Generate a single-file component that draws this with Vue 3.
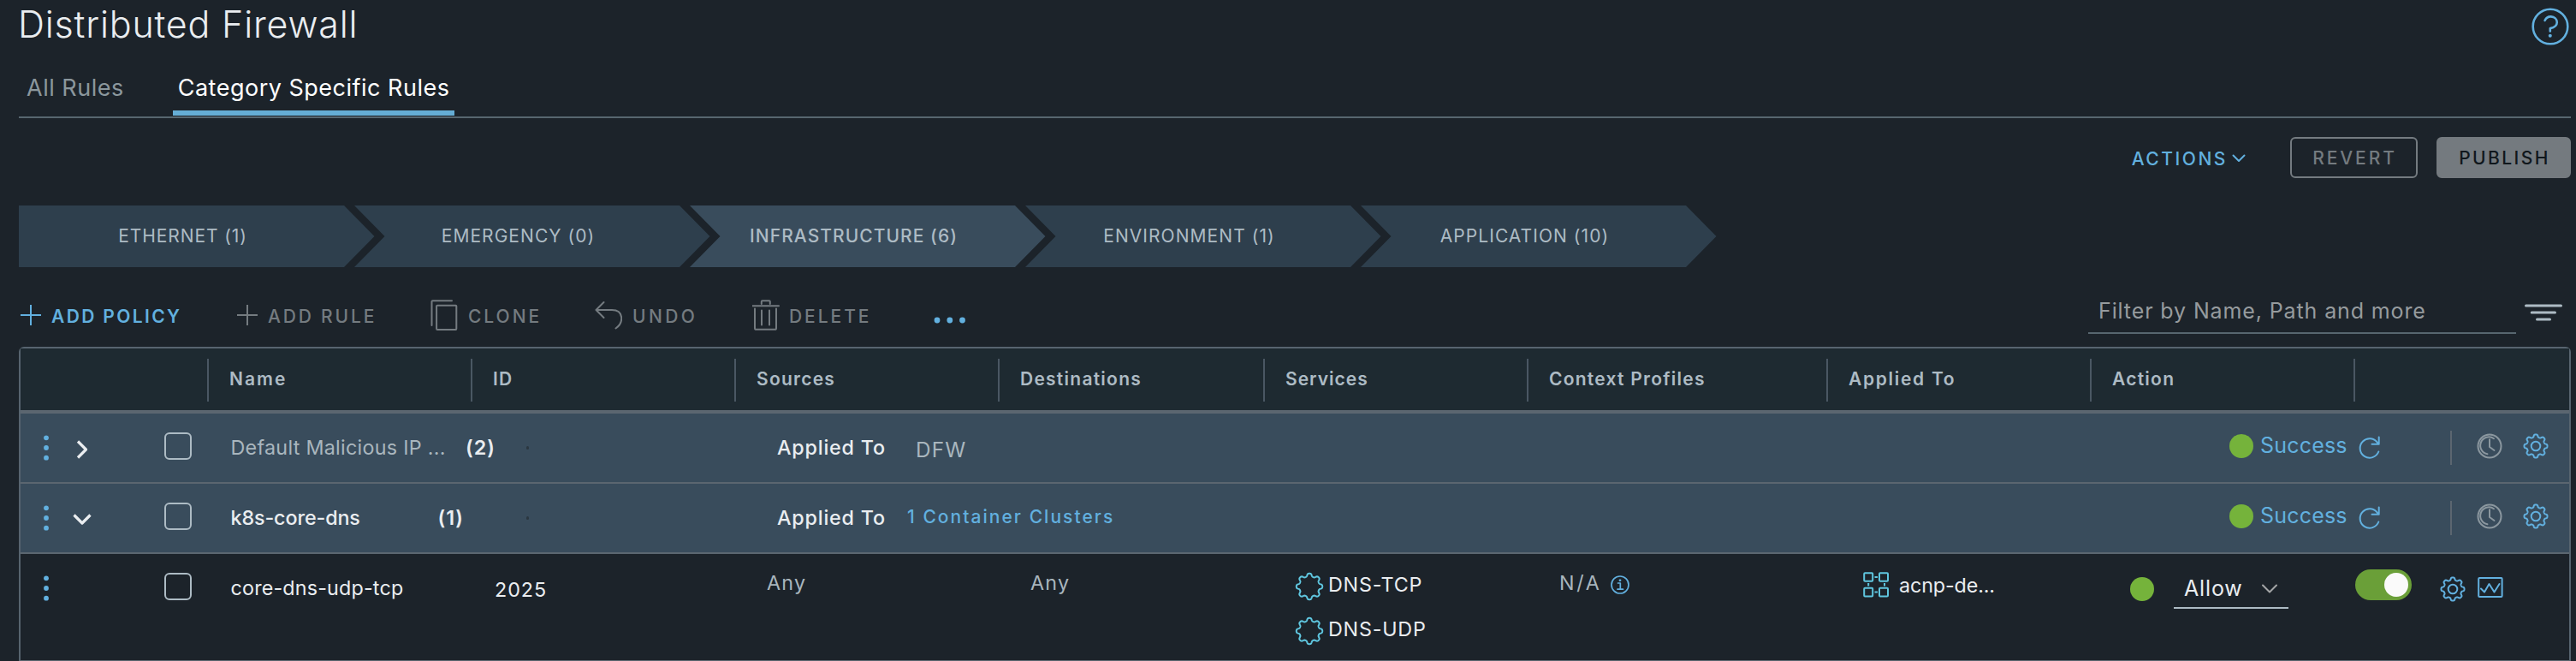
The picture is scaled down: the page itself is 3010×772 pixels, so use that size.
<script setup>
const stages = [
  { label: 'ETHERNET (1)' },
  { label: 'EMERGENCY (0)' },
  { label: 'INFRASTRUCTURE (6)', active: true },
  { label: 'ENVIRONMENT (1)' },
  { label: 'APPLICATION (10)' }
]
const columns = ['', 'Name', 'ID', 'Sources', 'Destinations', 'Services', 'Context Profiles', 'Applied To', 'Action', '']
const policies = [
  { name: 'Default Malicious IP ...', count: '(2)', open: false, scope: 'DFW' },
  { name: 'k8s-core-dns', count: '(1)', open: true, scope: '1 Container Clusters' }
]
const services = ['DNS-TCP', 'DNS-UDP']

// Closed eight-lobed outline centred on (c, c); a higher sharpness squares off the lobes.
function cog(c, outer, inner, sharpness) {
  const mid = (outer + inner) / 2
  const amp = (outer - inner) / 2 / Math.tanh(sharpness)
  const points = []
  for (let i = 0; i < 192; i++) {
    const a = (i / 192) * Math.PI * 2
    const r = mid + amp * Math.tanh(sharpness * Math.cos(8 * a))
    points.push(`${(c + r * Math.cos(a)).toFixed(2)} ${(c + r * Math.sin(a)).toFixed(2)}`)
  }
  return `M${points.join('L')}Z`
}
const cogSmall = cog(15, 13.5, 10.6, 2)
const cogLarge = cog(17, 15.2, 11.8, 1.7)
</script>

<template>
  <div class="page">
    <header class="head">
      <h1>Distributed Firewall</h1>
      <svg class="help" width="44" height="44" viewBox="0 0 44 44">
        <circle cx="22" cy="22" r="20.3" />
        <path d="M15.6 14.8C17.6 11.2 20.4 10.2 22.8 10.4c4 .3 7 3 7 6.700 0 4.300-3.600 6.200-8 7V27.500" />
        <circle class="pt" cx="21.800" cy="32.800" r="2" />
      </svg>
    </header>

    <nav class="tabs">
      <a class="tab">All Rules</a>
      <a class="tab on">Category Specific Rules</a>
    </nav>

    <div class="actions">
      <span class="menu">ACTIONS</span>
      <svg class="menu-caret" width="18" height="12" viewBox="0 0 18 12"><path d="M2.500 2.500 9 9l6.500-6.500" /></svg>
      <button class="btn">REVERT</button>
      <button class="btn solid">PUBLISH</button>
    </div>

    <div class="stages">
      <div v-for="(s, i) in stages" :key="s.label" class="stage" :class="{ first: i === 0, active: s.active }">{{ s.label }}</div>
    </div>

    <div class="toolbar">
      <div class="tool policy">
        <svg width="24" height="24" viewBox="0 0 24 24"><path d="M12 0v24M0 12h24" /></svg>
        <span>ADD POLICY</span>
      </div>
      <div class="tool rule">
        <svg width="24" height="24" viewBox="0 0 24 24"><path d="M12 0v24M0 12h24" /></svg>
        <span>ADD RULE</span>
      </div>
      <div class="tool clone">
        <svg width="32" height="36" viewBox="0 0 32 36"><path d="M1.500 30V2.200Q1.500 1.200 2.500 1.200H25M8 6.700H29.500Q30.300 6.700 30.300 7.500V34Q30.300 34.900 29.500 34.900H8Q7.100 34.900 7.100 34V7.500Q7.100 6.700 8 6.700Z" /></svg>
        <span>CLONE</span>
      </div>
      <div class="tool undo">
        <svg width="32" height="36" viewBox="0 0 32 36"><path d="M10.500 3 1.500 12l9 9M1.500 12H20C34 12 34 27 24.500 33.500" /></svg>
        <span>UNDO</span>
      </div>
      <div class="tool delete">
        <svg width="32" height="36" viewBox="0 0 32 36"><path d="M0 7.200h31M10.800 5V2.200Q10.800 1.200 11.800 1.200h8q1 0 1 1V5M3 10.500V33.200Q3 34.800 4.500 34.800H26.500Q28 34.800 28 33.200V10.500M11 12.500V29.500M20 12.500V29.500" /></svg>
        <span>DELETE</span>
      </div>
      <svg class="more" width="38" height="10" viewBox="0 0 38 10"><circle cx="4" cy="5" r="3.400" /><circle cx="18.800" cy="5" r="3.400" /><circle cx="33.500" cy="5" r="3.400" /></svg>
      <div class="filter">Filter by Name, Path and more</div>
      <svg class="filter-icon" width="44" height="20" viewBox="0 0 44 20"><path d="M1.500 2H42.500M8.200 10H35.500M14.500 18H29.500" /></svg>
    </div>

    <section class="table">
      <div class="row thead">
        <div v-for="(c, i) in columns" :key="i" class="th">{{ c }}</div>
      </div>

      <div v-for="p in policies" :key="p.name" class="row group" :class="{ open: p.open }">
        <div class="controls">
          <svg class="dots" width="8" height="32" viewBox="0 0 8 32"><circle cx="4" cy="4.300" r="2.900" /><circle cx="4" cy="16" r="2.900" /><circle cx="4" cy="27.700" r="2.900" /></svg>
          <svg v-if="!p.open" class="toggle-caret" width="24" height="24" viewBox="0 0 24 24"><path d="M7 2.500 16.500 12 7 21.500" /></svg>
          <svg v-else class="toggle-caret" width="24" height="24" viewBox="0 0 24 24"><path d="M2.500 6.500 12 16l9.500-9.500" /></svg>
          <span class="check"></span>
        </div>
        <div class="policy-name">
          <span class="pname">{{ p.name }}</span>
          <span class="count">{{ p.count }}</span>
        </div>
        <span class="speck"></span>
        <div class="scope">
          <span class="scope-label">Applied To</span>
          <span class="scope-value">{{ p.scope }}</span>
        </div>
        <div class="status">
          <span class="bullet"></span>
          <span class="success">Success</span>
          <svg class="refresh" width="26" height="28" viewBox="0 0 26 28"><path d="M23.700 1.500V9.700H15.500M22.300 8.500A11.200 11.200 0 1 0 23.300 18.500" /></svg>
          <span class="bar"></span>
          <svg class="clock" width="30" height="30" viewBox="0 0 30 30"><circle cx="15" cy="15" r="13.500" /><path d="M15 7.300V16l5.500 4M20 6.200A10 10 0 1 0 12.500 24.200" /></svg>
          <svg class="gear" width="30" height="30" viewBox="0 0 30 30"><path :d="cogSmall" /><circle cx="15" cy="15" r="5.300" /></svg>
        </div>
      </div>

      <div class="row rule-row">
        <div class="controls">
          <svg class="dots" width="8" height="32" viewBox="0 0 8 32"><circle cx="4" cy="4.300" r="2.900" /><circle cx="4" cy="16" r="2.900" /><circle cx="4" cy="27.700" r="2.900" /></svg>
          <span class="check"></span>
        </div>
        <div class="cell rname">core-dns-udp-tcp</div>
        <div class="cell rid">2025</div>
        <div class="cell any">Any</div>
        <div class="cell any">Any</div>
        <div class="cell services">
          <div v-for="s in services" :key="s" class="service">
            <svg width="34" height="34" viewBox="0 0 34 34"><path :d="cogLarge" /></svg>
            <span>{{ s }}</span>
          </div>
        </div>
        <div class="cell context">
          <span>N/A</span>
          <svg width="24" height="24" viewBox="0 0 24 24"><circle cx="12" cy="12" r="10" /><path d="M9.500 10h2.800v7M9 17.200h6.500" /><circle class="pt" cx="12" cy="6.800" r="1.400" /></svg>
        </div>
        <div class="cell applied">
          <svg width="30" height="30" viewBox="0 0 30 30"><rect x="1.200" y="1.200" width="10" height="9.600" rx="1" /><rect x="19" y="1.200" width="10" height="9.600" rx="1" /><rect x="1.200" y="18.800" width="10" height="9.600" rx="1" /><rect x="19" y="18.800" width="10" height="9.600" rx="1" /><path d="M13.500 6h3.500M13.500 23.600h3.500M6.200 13v3.500M25 13v3.500" /></svg>
          <span>acnp-de...</span>
        </div>
        <div class="cell action">
          <span class="bullet"></span>
          <div class="select">
            <span>Allow</span>
            <svg width="20" height="14" viewBox="0 0 20 14"><path d="M2 2.500 10 10.500l8-8" /></svg>
          </div>
        </div>
        <div class="cell extras">
          <span class="switch"><i></i></span>
          <svg class="gear" width="30" height="30" viewBox="0 0 30 30"><path :d="cogSmall" /><circle cx="15" cy="15" r="5.300" /></svg>
          <svg class="chart" width="30" height="24" viewBox="0 0 30 24"><rect x="1.200" y="1" width="27.400" height="22" rx="1" /><path d="M4 13.500 8 17.500 13.500 8 19.500 17.500 25.500 8" /></svg>
        </div>
      </div>
    </section>
  </div>
</template>

<style>
html,
body {
  margin: 0;
  background: #1c232a;
  overflow: hidden;
}
</style>

<style scoped>
.page {
  box-sizing: border-box;
  width: 3010px;
  height: 772px;
  padding: 0 6px 0 22px;
  overflow: hidden;
  background: #1c232a;
  color: #eaedf0;
  font-family: Inter, "Noto Sans", sans-serif;
}
.page * {
  box-sizing: border-box;
  white-space: nowrap;
}
svg {
  display: block;
  flex: none;
  fill: none;
  stroke: currentColor;
  stroke-width: 2;
  stroke-linecap: round;
  stroke-linejoin: round;
}
svg .pt {
  fill: currentColor;
  stroke: none;
}
.head {
  display: flex;
  justify-content: space-between;
  height: 57px;
}
h1 {
  margin: 0 0 0 -1px;
  font-size: 43px;
  line-height: 57px;
  font-weight: 350;
  letter-spacing: 0.800px;
}
.help {
  margin: 9px 2px 0 0;
  color: #62b0df;
  stroke-width: 2.600;
}
.tabs {
  display: flex;
  height: 81px;
  border-bottom: 2px solid #57666f;
}
.tab {
  height: 78px;
  padding: 19px 7px 0 9px;
  border-bottom: 6px solid transparent;
  font-size: 27px;
  line-height: 53px;
  letter-spacing: 0.500px;
  color: #8b979d;
}
.tab.on {
  width: 329px;
  margin-left: 50px;
  padding-left: 6px;
  color: #fff;
  border-color: #65add5;
}
.actions {
  display: flex;
  justify-content: flex-end;
  align-items: center;
  height: 48px;
  margin-top: 22px;
  font-size: 21px;
}
.menu {
  padding-top: 2px;
  color: #62b0df;
  font-weight: 500;
  letter-spacing: 2.550px;
}
.menu-caret {
  margin: 2px 51px 0 4px;
  color: #62b0df;
}
.btn {
  width: 149px;
  height: 48px;
  padding: 0 0 0 2px;
  border: 2px solid #747b80;
  border-radius: 6px;
  background: transparent;
  color: #747b80;
  font: 500 21px Inter, sans-serif;
  letter-spacing: 2.910px;
}
.btn.solid {
  width: 157px;
  margin-left: 22px;
  background: #747a7f;
  border-color: #747a7f;
  color: #10171c;
  letter-spacing: 2.440px;
}
.stages {
  display: flex;
  margin-top: 32px;
}
.stage {
  width: 415.500px;
  height: 72px;
  margin-right: -23.500px;
  padding: 0 32.500px 1px 0;
  clip-path: polygon(0 0, 380px 0, 100% 50%, 380px 100%, 0 100%, 35.500px 50%);
  background: #2e3f4d;
  color: #adbbc4;
  font-size: 21px;
  line-height: 71px;
  letter-spacing: 1.050px;
  text-align: center;
}
.stage.first {
  letter-spacing: 0.910px;
  clip-path: polygon(0 0, 380px 0, 100% 50%, 380px 100%, 0 100%);
}
.stage.active {
  background: #394c5c;
  font-weight: 500;
}
.toolbar {
  display: flex;
  align-items: flex-start;
  height: 93px;
  padding-top: 32px;
  color: #747b80;
  font-size: 21px;
  font-weight: 500;
  letter-spacing: 2.950px;
}
.tool {
  display: flex;
  align-items: center;
  height: 48px;
}
.tool span {
  padding-top: 3px;
}
.tool.policy {
  width: 253px;
  padding-left: 2px;
  gap: 12px;
  color: #62b0df;
  font-weight: 600;
  letter-spacing: 2.360px;
}
.tool.rule {
  width: 225px;
  padding-left: 2px;
  gap: 12px;
  letter-spacing: 2.830px;
}
.tool.clone {
  width: 195px;
  padding-left: 3px;
  gap: 12px;
}
.tool.undo {
  width: 182px;
  gap: 12px;
  letter-spacing: 3.410px;
}
.tool.delete {
  width: 192px;
  padding-left: 2px;
  gap: 11px;
}
.more {
  margin: 25px 0 0 22px;
  fill: #62b0df;
  stroke: none;
}
.filter {
  width: 500px;
  height: 50px;
  margin: -4px 10px 0 auto;
  padding: 0 0 3px 12px;
  border-bottom: 2px solid #57666f;
  color: #969b9e;
  font-size: 25px;
  font-weight: 400;
  line-height: 46px;
  letter-spacing: 0.880px;
}
.filter-icon {
  margin: 11px 10px 0 0;
  color: #adbbc4;
  stroke-width: 3;
}
.table {
  height: 400px;
  border: 2px solid #57646f;
  border-radius: 6px 6px 0 0;
}
.row {
  display: flex;
}
.thead {
  height: 76px;
  padding-top: 12px;
  border-bottom: 4px solid #5b6670;
  background: #1e2a31;
}
.th {
  width: 308px;
  height: 50px;
  padding: 0 0 1px 24px;
  border-left: 2px solid #4a5763;
  color: #adbbc4;
  font-size: 21px;
  font-weight: 600;
  line-height: 47px;
  letter-spacing: 1.250px;
}
.th:nth-child(1) {
  width: 218px;
  border: 0;
}
.th:nth-child(2) {
  letter-spacing: 2px;
}
.th:nth-child(5) {
  width: 310px;
}
.th:nth-child(6) {
  letter-spacing: 1px;
}
.th:nth-child(7) {
  width: 350px;
}
.th:nth-child(8) {
  letter-spacing: 1.700px;
}
.th:nth-child(10) {
  width: 250px;
}
.group {
  height: 82px;
  border-bottom: 2px solid #5b6670;
  background: #394c5c;
  font-size: 23.300px;
  line-height: 80px;
}
.controls {
  display: flex;
  width: 218px;
  height: 80px;
  padding-left: 26px;
}
.dots {
  margin-top: 24px;
  fill: #62b0df;
  stroke: none;
}
.toggle-caret {
  margin: 30px 0 0 26px;
  stroke-width: 3.200;
  stroke-linecap: butt;
}
.check {
  width: 32px;
  height: 32px;
  margin: 22px 18px 0 auto;
  border: 2px solid #adbbc4;
  border-radius: 6px;
}
.policy-name {
  display: flex;
  width: 373px;
  padding-left: 27.500px;
}
.pname {
  width: 274.500px;
  color: #a9b6be;
  letter-spacing: 0.280px;
}
.count {
  font-weight: 600;
  letter-spacing: 1px;
}
.open .pname {
  width: 242px;
  color: #eaedf0;
  font-weight: 500;
  letter-spacing: -0.100px;
}
.speck {
  width: 3px;
  height: 4px;
  margin-top: 38px;
  border-radius: 2px;
  background: #2b3740;
}
.scope {
  display: flex;
  margin-left: 290px;
}
.scope-label {
  width: 162px;
  font-weight: 500;
  letter-spacing: 0.810px;
}
.scope-value {
  padding-top: 2px;
  color: #a9b6be;
  font-size: 24.300px;
  letter-spacing: 1.200px;
}
.open .scope-label {
  width: 152px;
}
.open .scope-value {
  padding: 0;
  margin-top: -1px;
  color: #62b0df;
  font-size: 21px;
  font-weight: 500;
  letter-spacing: 2.040px;
}
.bullet {
  flex: none;
  width: 28px;
  height: 28px;
  border-radius: 50%;
  background: #75b33b;
}
.status {
  display: flex;
  width: 398px;
  margin-left: auto;
  color: #62b0df;
}
.status .bullet {
  margin: 24px 8px 0 1px;
}
.success {
  width: 115px;
  font-size: 25px;
  line-height: 75px;
  letter-spacing: 0.190px;
}
.refresh {
  margin: 26px 0 0 0;
}
.bar {
  width: 2px;
  height: 40px;
  margin: 20px 29px 0 81px;
  background: #5b6670;
}
.clock {
  margin: 23px 24px 0 0;
  color: #8b979f;
}
.group .gear {
  margin-top: 23px;
}
.rule-row {
  height: 126px;
  border-bottom: 2px solid #5b6670;
  font-size: 23.300px;
}
.cell {
  display: flex;
  width: 308px;
  padding-left: 30px;
  line-height: 30px;
}
.rname {
  padding: 25px 0 0 27.500px;
  letter-spacing: 0.180px;
}
.rid {
  padding: 27px 0 0 28px;
  letter-spacing: 0.960px;
}
.any {
  padding: 19px 0 0 38px;
  color: #a9b6be;
  letter-spacing: 1.300px;
}
.any + .any {
  width: 310px;
}
.services {
  flex-direction: column;
  gap: 18px;
  padding: 21px 0 0 37px;
  letter-spacing: 0.800px;
}
.service {
  display: flex;
  gap: 5px;
  height: 34px;
}
.service svg {
  color: #5fc6df;
}
.service span {
  line-height: 29px;
}
.context {
  width: 350px;
  padding: 19px 0 0 38px;
  gap: 9px;
  color: #a9b6be;
  letter-spacing: 2.700px;
}
.context svg {
  margin-top: 5px;
  color: #62b0df;
  stroke-width: 1.700;
}
.applied {
  padding: 21px 0 0 43px;
  gap: 12px;
  letter-spacing: -0.120px;
}
.applied svg {
  color: #5fc6df;
  stroke-linecap: butt;
}
.applied span {
  line-height: 32px;
}
.action {
  padding: 27px 0 0 47px;
}
.select {
  display: flex;
  justify-content: space-between;
  width: 134px;
  height: 56px;
  margin: -19px 0 0 23px;
  padding: 16px 12px 0 12px;
  border-bottom: 2px solid #adbbc4;
  font-size: 25px;
  letter-spacing: 0.850px;
}
.select svg {
  margin-top: 10px;
  color: #a3a5a6;
}
.select span {
  padding-top: 1px;
}
.extras {
  width: 252px;
  padding: 18px 0 0 2px;
}
.switch {
  display: flex;
  justify-content: flex-end;
  width: 66px;
  height: 36px;
  padding: 4px;
  border-radius: 18px;
  background: #6a9f38;
}
.switch i {
  width: 28px;
  height: 28px;
  border-radius: 50%;
  background: #fafafa;
}
.extras .gear {
  margin: 8px 14px 0 33px;
  color: #62b0df;
}
.chart {
  margin-top: 9px;
  color: #62b0df;
}
</style>
